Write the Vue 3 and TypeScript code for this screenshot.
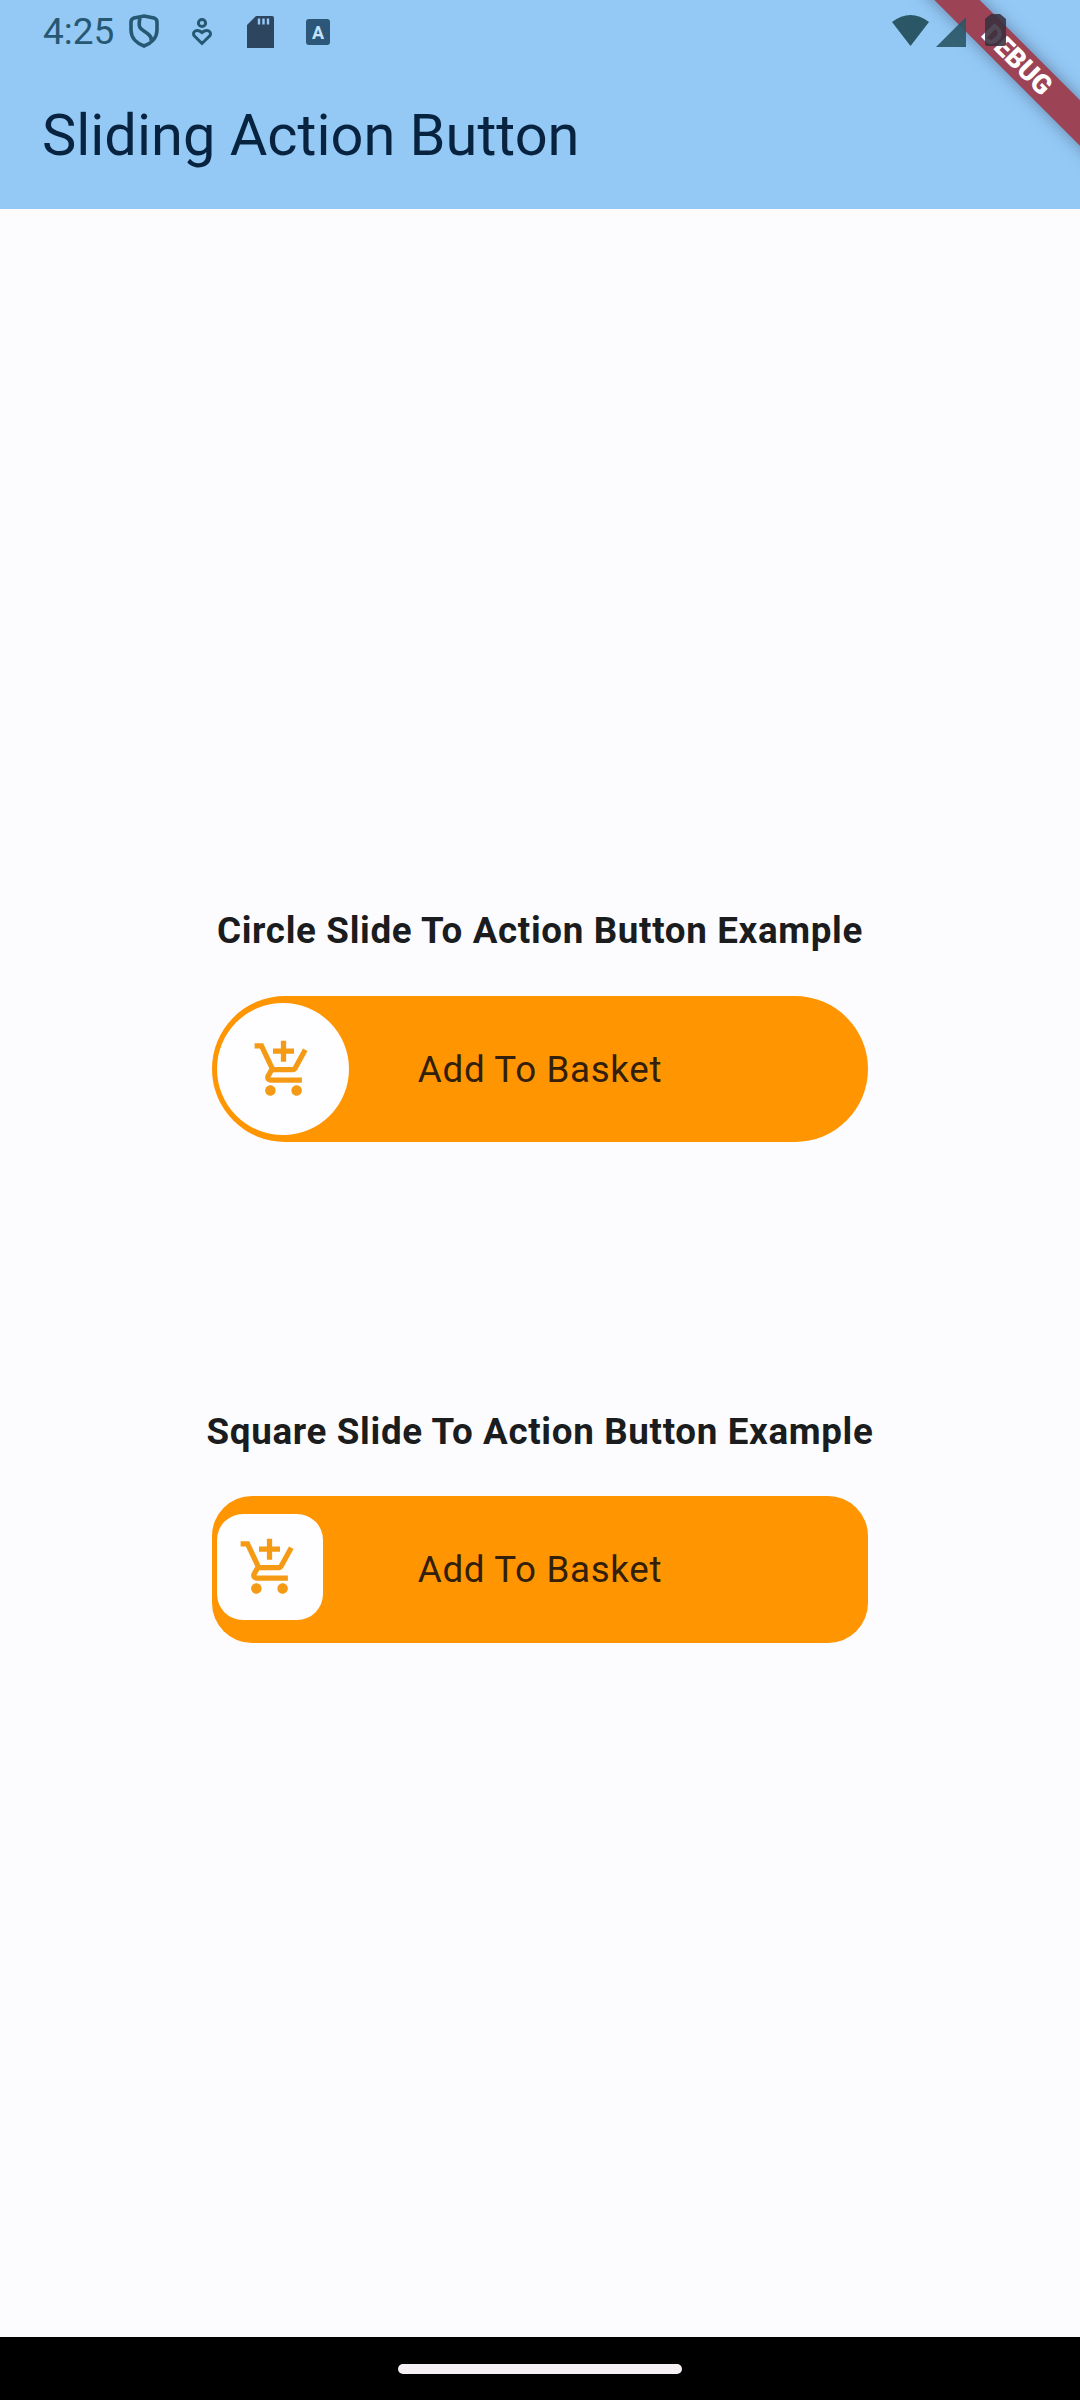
<script setup lang="ts">
interface SlideButton {
  title: string
  label: string
  shape: 'circle' | 'square'
}

const buttons: SlideButton[] = [
  { title: 'Circle Slide To Action Button Example', label: 'Add To Basket', shape: 'circle' },
  { title: 'Square Slide To Action Button Example', label: 'Add To Basket', shape: 'square' },
]
</script>

<template>
  <div class="screen">
    <header class="top">
      <div class="status">
        <span class="clock">4:25</span>
        <svg class="ic shield" viewBox="0 0 32 36">
          <path d="M16 3 L26 5 Q29 6 29 9 V17 C29 25 23 30.500 16 33 C9 30.500 3 25 3 17 V9 Q3 6 6 5 Z" />
          <path d="M12 5 C9 18 15 16 20 21 Q24 24 23 28" />
        </svg>
        <svg class="ic heart" viewBox="0 0 22 30">
          <circle cx="11" cy="6" r="3.600" />
          <path d="M11 26.500 L3 18.500 C1 15 5.500 11 11 15.500 C16.500 11 21 15 19 18.500 Z" />
        </svg>
        <svg class="ic card" viewBox="0 0 27 32">
          <path class="solid" d="M9 0 H25 Q27 0 27 2 V32 H0 V9 Z" />
          <path class="slots" d="M12 2.500 V8.500 M16.500 2.500 V8.500 M21 2.500 V8.500" />
        </svg>
        <span class="lang">A</span>
        <svg class="ic wifi" viewBox="0 0 37 31">
          <path d="M0 7 Q18.500 -7 37 7 L18.500 31 Z" />
        </svg>
        <svg class="ic signal" viewBox="0 0 30 30">
          <path d="M30 0 V30 H0 Z" />
        </svg>
        <svg class="ic battery" viewBox="0 0 21 32">
          <path d="M6 0 H15 L21 5 V30 Q21 32 19 32 H2 Q0 32 0 30 V5 Z" />
        </svg>
      </div>
      <h1 class="title">Sliding Action Button</h1>
      <div class="banner"><span>DEBUG</span></div>
    </header>

    <main class="content">
      <section v-for="b in buttons" :key="b.shape" class="example" :class="b.shape">
        <h2 class="heading">{{ b.title }}</h2>
        <div class="track">
          <div class="knob">
            <svg viewBox="0 0 24 24">
              <path
                d="M11 9h2V6h3V4h-3V1h-2v3H8v2h3v3zm-4 9c-1.100 0-1.990.9-1.990 2S5.900 22 7 22s2-.9 2-2-.9-2-2-2zm10 0c-1.100 0-1.990.9-1.990 2s.89 2 1.990 2 2-.9 2-2-.9-2-2-2zm-8.900-5h7.450c.75 0 1.410-.41 1.750-1.030l3.860-7.010L19.420 4l-3.870 7H8.530L4.270 2H1v2h2l3.600 7.590-1.350 2.440C4.520 15.370 5.480 17 7 17h12v-2H7l1.100-2z"
              />
            </svg>
          </div>
          <span class="label">{{ b.label }}</span>
        </div>
      </section>
    </main>

    <footer class="nav"><div class="handle"></div></footer>
  </div>
</template>

<style>
body {
  margin: 0;
}
</style>

<style scoped>
.screen {
  width: 1080px;
  height: 2400px;
  display: flex;
  flex-direction: column;
  overflow: hidden;
  background: #fcfcff;
  font-family: Roboto, 'Noto Sans', sans-serif;
}
.top {
  position: relative;
  flex: none;
  height: 209px;
  overflow: hidden;
  background: #94c9f5;
}
.status {
  position: relative;
  z-index: 1;
  display: flex;
  align-items: center;
  height: 63px;
  color: #275873;
}
.clock {
  width: 74px;
  margin-left: 43px;
  font-size: 37px;
  line-height: 63px;
  white-space: nowrap;
}
.ic {
  flex: none;
  fill: currentColor;
}
.shield {
  width: 32px;
  height: 36px;
  margin-left: 11px;
  margin-top: -1px;
  fill: none;
  stroke: currentColor;
  stroke-width: 3.6;
}
.heart {
  width: 22px;
  height: 30px;
  margin-left: 31px;
  fill: none;
  stroke: currentColor;
  stroke-width: 3;
}
.card {
  width: 27px;
  height: 32px;
  margin-left: 34px;
  color: #2e4560;
}
.slots {
  stroke: #94c9f5;
  stroke-width: 2.4;
}
.lang {
  width: 24px;
  height: 26px;
  margin-left: 32px;
  border-radius: 3px;
  background: #2c5778;
  color: #c4e2fa;
  font-size: 18px;
  font-weight: 700;
  line-height: 27px;
  text-align: center;
}
.wifi {
  width: 37px;
  height: 31px;
  margin-left: 562px;
  margin-top: -3px;
  color: #2a5666;
}
.signal {
  width: 30px;
  height: 30px;
  margin-left: 7px;
  color: #2a5666;
  opacity: 0.9;
}
.battery {
  width: 21px;
  height: 32px;
  margin-left: 19px;
  margin-top: -4px;
  color: #38303e;
  opacity: 0.88;
}
.title {
  margin: 0 0 0 42px;
  font-size: 57.75px;
  font-weight: 400;
  line-height: 144px;
  color: #08233f;
  white-space: nowrap;
}
.banner {
  position: absolute;
  right: -97px;
  top: 44px;
  width: 320px;
  height: 32px;
  background: #9c4355;
  box-shadow: 0 0 16px rgba(50, 60, 90, 0.5);
  color: #fff;
  font-size: 27px;
  font-weight: 900;
  line-height: 32px;
  text-align: center;
  transform: rotate(45deg);
}
.content {
  flex: 1;
  display: flex;
  flex-direction: column;
  align-items: center;
}
.example {
  display: flex;
  flex-direction: column;
  align-items: center;
}
.circle {
  margin-top: 696px;
}
.square {
  margin-top: 264px;
}
.heading {
  margin: 0;
  height: 52px;
  line-height: 52px;
  font-size: 36.75px;
  font-weight: 700;
  color: #1a1c1e;
  letter-spacing: 0.66px;
  white-space: nowrap;
}
.track {
  position: relative;
  display: flex;
  align-items: center;
  justify-content: center;
  box-sizing: border-box;
  width: 656px;
  height: 146px;
  margin-top: 39px;
  background: #ff9500;
}
.circle .track {
  border-radius: 73px;
}
.square .track {
  height: 147px;
  margin-top: 38px;
  border-radius: 40px;
}
.knob {
  position: absolute;
  left: 5px;
  display: flex;
  align-items: center;
  justify-content: center;
  background: #fefdff;
}
.circle .knob {
  top: 7px;
  width: 132px;
  height: 132px;
  border-radius: 50%;
}
.square .knob {
  top: 18px;
  width: 106px;
  height: 106px;
  border-radius: 26px;
}
.knob svg {
  width: 63px;
  height: 63px;
  fill: #f59a14;
}
.label {
  font-size: 36.75px;
  color: #33200c;
  letter-spacing: 0.66px;
  white-space: nowrap;
}
.nav {
  flex: none;
  display: flex;
  justify-content: center;
  height: 63px;
  background: #000;
}
.handle {
  width: 284px;
  height: 10px;
  margin-top: 27px;
  border-radius: 5px;
  background: #f4f0f4;
}
</style>
